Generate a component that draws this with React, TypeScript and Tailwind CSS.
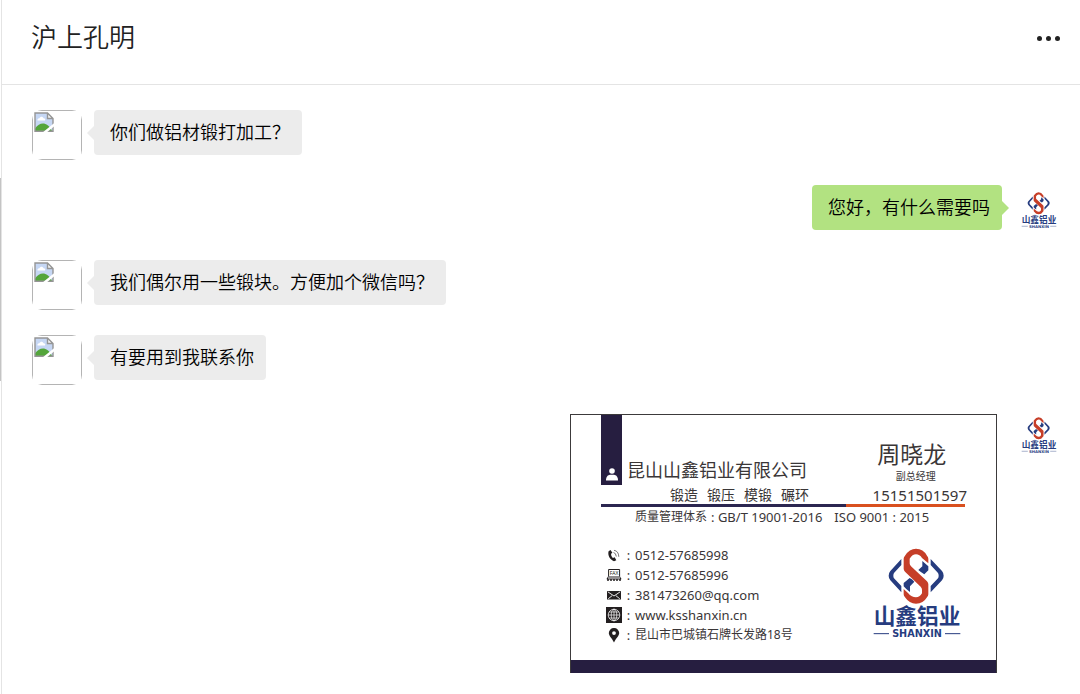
import type { ReactNode } from 'react';

type Message = {
  id: number;
  from: 'me' | 'them';
  text?: string;
};

const MESSAGES: Message[] = [
  { id: 1, from: 'them', text: '你们做铝材锻打加工？' },
  { id: 2, from: 'me', text: '您好，有什么需要吗' },
  { id: 3, from: 'them', text: '我们偶尔用一些锻块。方便加个微信吗？' },
  { id: 4, from: 'them', text: '有要用到我联系你' },
  { id: 5, from: 'me' },
];

const SERVICES = ['锻造', '锻压', '模锻', '碾环'];

function BrokenAvatar() {
  return (
    <div className="relative size-[50px] shrink-0" role="img" aria-label="头像">
      <div className="size-full overflow-hidden rounded-[10px]">
        <div className="size-full border border-[#b4b4b4]" />
      </div>
      <svg viewBox="0 0 20 20" className="absolute top-0.5 left-0.5 size-5" aria-hidden>
        <path d="M1 1h12.500L19 6.500V19H1z" fill="#c6d7f4" />
        <path d="M1 19v-2.500c2.500-3.500 5-5 8-5s6.500 2 9 7.500z" fill="#54a53b" />
        <path d="M3.500 8.500c-.4-1.600.8-2.600 2-2.300.6-2 3.400-2 4 0 1.400-.2 2.200 1.200 1.500 2.300z" fill="#fff" />
        <path d="M13.500 1v5.500H19z" fill="#f4f4f4" />
        <path
          d="M1 19.300V1h12.500L19 6.500v12.800zM13.500 1v5.500H19"
          fill="none"
          stroke="#959595"
          strokeWidth="1.400"
        />
        <path d="M10 21L21 12" stroke="#fff" strokeWidth="2.600" />
      </svg>
    </div>
  );
}

function Logo({ className }: { className: string }) {
  return (
    <svg viewBox="190 38 264 270" className={className} role="img" aria-label="山鑫铝业 SHANXIN">
      <g fill="#263c7f">
        <path d="M275 71v18l-22 24q-2 3-2 8t2 8l22 23v19l-33-36q-5-6-5-14t5-14z" />
        <path d="M363 71v18l22 24q2 3 2 8t-2 8l-22 23v19l34-36q5-6 5-14t-5-14z" />
        <path d="M338 77l18 16v12l-12 12q-10-6-18-13l12-11z" />
        <path d="M300 128q8 4 14 11l-13 14v17q-11-7-19-17v-10z" />
      </g>
      <path
        d="M356 84V70q0-5-4-9-11-21-33-21-20 0-33 21-4 4-4 9v30q0 5 4 9l47 45q4 4 4 9v11q-7 12-18 12-13 0-24-13l-13-12v16q0 5 4 9 13 19 33 19 22 0 33-19 4-4 4-9v-30q0-5-4-9l-48-45q-4-4-4-9V70q8-13 19-13t18 11z"
        fill="#c63e28"
      />
      <text
        x="322"
        y="267"
        textAnchor="middle"
        fontSize="65"
        className="fill-[#263c7f] font-['Noto_Sans_CJK_SC',sans-serif] font-bold"
      >
        山鑫铝业
      </text>
      <text
        x="322"
        y="306"
        textAnchor="middle"
        fontSize="29"
        className="fill-[#263c7f] font-['DejaVu_Sans',sans-serif] font-bold"
      >
        SHANXIN
      </text>
      <path d="M192 295h46M406 295h46" stroke="#263c7f" strokeWidth="3" />
    </svg>
  );
}

function PersonIcon() {
  return (
    <svg viewBox="0 0 12 13" className="h-[13px] w-3" aria-hidden>
      <circle cx="6" cy="3" r="2.800" fill="#fff" />
      <path d="M0 12.500c0-4 2-5.500 4-5.700h4c2 .2 4 1.700 4 5.700z" fill="#fff" />
    </svg>
  );
}

function PhoneIcon() {
  return (
    <svg viewBox="0 0 16 16" className="size-4" aria-hidden>
      <path
        d="M4.500 3L2.600 4.300C1.400 8 4 13 8 14.200l2.300-.9-1.600-3-1.800.6C5.600 9.800 5 8.300 5.100 6.700l1.300-.9z"
        fill="#231f20"
      />
      <path d="M7.500 5.500q2.500.5 2.800 4M8 3.300q4.600.7 4.800 6.500" fill="none" stroke="#231f20" strokeWidth=".6" />
    </svg>
  );
}

function FaxIcon() {
  return (
    <svg viewBox="0 0 16 16" className="size-4" aria-hidden>
      <path d="M2.600 9.500v-7h11v7" fill="none" stroke="#231f20" strokeWidth="1" />
      <text x="8" y="8" textAnchor="middle" fontSize="5" className="fill-[#231f20] font-['Noto_Sans',sans-serif]">
        FAX
      </text>
      <path d="M2 9.500h12l1.200 2v1H.8v-1z" fill="#231f20" />
      <path d="M2 11h12" stroke="#fff" strokeWidth="1" />
      <path d="M1 13h14" stroke="#231f20" strokeWidth="1.500" strokeDasharray="2 1" />
    </svg>
  );
}

function MailIcon() {
  return (
    <svg viewBox="0 0 16 16" className="size-4" aria-hidden>
      <path d="M1 4h14v8.500H1z" fill="#231f20" />
      <path d="M1.800 4.800L8 9l6.200-4.200M2.200 11.800l4-3.200M13.800 11.800l-4-3.200" fill="none" stroke="#fff" strokeWidth=".9" />
    </svg>
  );
}

function GlobeIcon() {
  return (
    <svg viewBox="0 0 16 16" className="size-4" aria-hidden>
      <path d="M0 0h16v16H0z" fill="#231f20" />
      <g fill="none" stroke="#fff" strokeWidth=".7">
        <circle cx="8" cy="8" r="5.800" />
        <ellipse cx="8" cy="8" rx="2.800" ry="5.800" />
        <path d="M8 2v12M2 8h12M3 5h10M3 11h10" />
      </g>
    </svg>
  );
}

function PinIcon() {
  return (
    <svg viewBox="0 0 16 16" className="size-4" aria-hidden>
      <path
        d="M8 1a5 5 0 0 0-5.200 5C2.800 9 6 11 8 15.500 10 11 13.200 9 13.200 6A5 5 0 0 0 8 1zm0 3.200a1.900 1.900 0 1 1 0 3.800 1.900 1.900 0 0 1 0-3.800z"
        fill="#231f20"
      />
    </svg>
  );
}

function ContactRow({ icon, children }: { icon: ReactNode; children: ReactNode }) {
  return (
    <li className="flex h-5 items-center whitespace-nowrap">
      {icon}
      <span className="w-[13px] text-center">:</span>
      {children}
    </li>
  );
}

function BusinessCard() {
  return (
    <article className="mt-1 mr-[5px] flex w-[427px] flex-col border border-b-0 border-[#3c3a3b] bg-white font-['Noto_Sans','Noto_Sans_CJK_SC',sans-serif] text-[13px] leading-5 font-normal text-[#3a3637]">
      <div className="pr-[31px] pl-[30px]">
        <div className="flex items-end justify-between">
          <div>
            <div className="flex h-[71px] gap-[5px]">
              <div className="flex h-[70px] w-[21px] items-end justify-center bg-[#261e40] pb-1">
                <PersonIcon />
              </div>
              <h2 className="self-end pb-1 text-[18px] leading-6">昆山山鑫铝业有限公司</h2>
            </div>
            <div className="ml-[69px] flex gap-[9px] text-[14px] leading-[18px]">
              {SERVICES.map((s) => (
                <span key={s}>{s}</span>
              ))}
            </div>
          </div>
          <div className="-mr-0.5 flex flex-col items-center whitespace-nowrap">
            <p className="mr-4 text-[23px] leading-6">周晓龙</p>
            <p className="mr-2 text-[10px] leading-5">副总经理</p>
            <p className="text-[15px] leading-[18px]">15151501597</p>
          </div>
        </div>
        <div className="flex h-[3px]">
          <div className="grow bg-[#2b2650]" />
          <div className="w-[119px] bg-[#d9501f]" />
        </div>
        <p className="flex pl-[34px] whitespace-pre">
          <span className="text-[12px]">质量管理体系</span>
          <span className="ml-1">: GB/T 19001-2016</span>
          <span className="ml-3">ISO 9001 : 2015</span>
        </p>
      </div>
      <div className="mt-[18px] mb-3.5 flex justify-between px-[35px]">
        <ul>
          <ContactRow icon={<PhoneIcon />}>
            <a href="tel:051257685998">0512-57685998</a>
          </ContactRow>
          <ContactRow icon={<FaxIcon />}>0512-57685996</ContactRow>
          <ContactRow icon={<MailIcon />}>
            <a href="mailto:381473260@qq.com">381473260@qq.com</a>
          </ContactRow>
          <ContactRow icon={<GlobeIcon />}>
            <a href="#site">www.ksshanxin.cn</a>
          </ContactRow>
          <ContactRow icon={<PinIcon />}>
            <span className="text-[12px]">昆山市巴城镇石牌长发路18号</span>
          </ContactRow>
        </ul>
        <Logo className="mt-[3px] h-[90px] w-[88px]" />
      </div>
      <div className="mt-px h-[13px] bg-[#261e40]" />
    </article>
  );
}

function Bubble({ mine, children }: { mine: boolean; children: ReactNode }) {
  return (
    <div className={`flex h-[45px] items-center ${mine ? '' : 'flex-row-reverse'}`}>
      <p
        className={`rounded-[4px] pt-[7px] pr-3 pb-[9px] pl-4 text-[18px] leading-[29px] text-black ${
          mine ? 'bg-[#b2e281]' : 'bg-[#ececec]'
        }`}
      >
        {children}
      </p>
      <span
        className={`border-y-[7px] border-y-transparent ${
          mine
            ? '-mr-[7px] border-l-[7px] border-l-[#b2e281]'
            : '-ml-[7px] border-r-[7px] border-r-[#ececec]'
        }`}
      />
    </div>
  );
}

function MessageRow({ message }: { message: Message }) {
  const mine = message.from === 'me';
  return (
    <li className={`flex min-h-[50px] items-start gap-3 ${mine ? 'flex-row-reverse' : ''}`}>
      {mine ? (
        <div className="flex size-[50px] shrink-0 items-center justify-center">
          <Logo className="size-9" />
        </div>
      ) : (
        <BrokenAvatar />
      )}
      {message.text ? <Bubble mine={mine}>{message.text}</Bubble> : <BusinessCard />}
    </li>
  );
}

export default function App() {
  return (
    <div className="flex min-h-screen bg-white font-['Noto_Sans_CJK_SC',sans-serif] font-[350]">
      <div className="w-px shrink-0 pt-[178px]">
        <div className="h-[203px] bg-[#c4c4c4]" />
      </div>
      <main className="min-w-0 grow border-l border-[#e4e4e4]">
        <header className="flex h-[85px] items-center justify-between border-b border-[#e4e4e4] pr-5 pb-2 pl-[29px]">
          <h1 className="pb-1 text-[26px] leading-9 text-[#222]">沪上孔明</h1>
          <button type="button" aria-label="更多" className="flex gap-1">
            <span className="size-[5px] rounded-full bg-[#222]" />
            <span className="size-[5px] rounded-full bg-[#222]" />
            <span className="size-[5px] rounded-full bg-[#222]" />
          </button>
        </header>
        <ul className="flex flex-col gap-[25px] pt-[25px] pr-4 pl-[30px]">
          {MESSAGES.map((m) => (
            <MessageRow key={m.id} message={m} />
          ))}
        </ul>
      </main>
    </div>
  );
}
